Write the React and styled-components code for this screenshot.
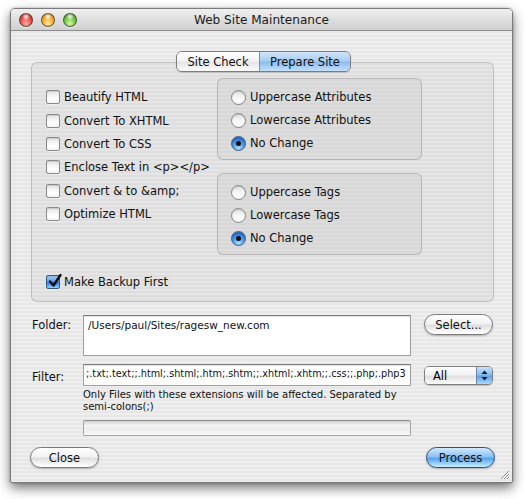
import React from "react";
import styled, { createGlobalStyle, css } from "styled-components";

const Global = createGlobalStyle`
  html, body { margin: 0; padding: 0; background: #ffffff; }
  body { font-family: "DejaVu Sans", "Liberation Sans", sans-serif; color: #000; }
  * { box-sizing: border-box; }
`;

const Page = styled.div`
  width: 525px;
  height: 499px;
  padding: 8px 12px 0 10px;
`;

const Window = styled.div`
  width: 503px;
  height: 475px;
  display: flex;
  flex-direction: column;
  border: 1px solid #7a7a7a;
  border-radius: 5px 5px 2px 2px;
  box-shadow: 0 5px 12px rgba(0, 0, 0, 0.55), 0 0 2px rgba(0,0,0,0.3);
  background: repeating-linear-gradient(180deg, #eeeeee 0px, #eeeeee 2px, #e7e7e7 2px, #e7e7e7 4px);
  overflow: hidden;
  position: relative;
`;

const TitleBar = styled.div`
  height: 22px;
  flex: none;
  display: flex;
  align-items: center;
  position: relative;
  padding-left: 8px;
  gap: 8px;
  background: linear-gradient(180deg, #f0f0f0 0%, #e0e0e0 45%, #cfcfcf 100%);
  border-bottom: 1px solid #8f8f8f;
`;

const lightColors = {
  red: ["#ffb0a8", "#e0443a", "#a3160f"],
  yellow: ["#ffe9a0", "#f0a620", "#b86f05"],
  green: ["#d9f7a8", "#66c23a", "#2f7f12"],
};

const Light = styled.span`
  width: 14px;
  height: 14px;
  border-radius: 50%;
  flex: none;
  border: 1px solid rgba(60, 60, 60, 0.75);
  background:
    radial-gradient(circle at 50% 22%, rgba(255,255,255,0.9) 0, rgba(255,255,255,0.2) 30%, transparent 42%),
    radial-gradient(circle at 50% 80%, ${(p) => lightColors[p.$c][0]} 0, ${(p) => lightColors[p.$c][1]} 55%, ${(p) => lightColors[p.$c][2]} 100%);
  box-shadow: 0 1px 1px rgba(255,255,255,0.6);
`;

const Title = styled.div`
  position: absolute;
  left: 0;
  right: 0;
  top: 0;
  height: 22px;
  line-height: 22px;
  text-align: center;
  font-size: 12.1px;
  color: #1a1a1a;
  pointer-events: none;
`;

const Body = styled.div`
  flex: 1;
  display: flex;
  flex-direction: column;
  padding: 20px 18px 0 20px;
`;

const Tabs = styled.div`
  display: flex;
  align-self: center;
  margin-left: 2px;
  height: 21px;
  margin-bottom: -10px;
  position: relative;
  z-index: 1;
  border: 1px solid #7c7c7c;
  border-radius: 6px;
  overflow: hidden;
  box-shadow: 0 1px 1px rgba(0,0,0,0.15);
`;

const Tab = styled.div`
  width: ${(p) => p.$w}px;
  height: 100%;
  display: flex;
  align-items: center;
  justify-content: center;
  font-size: 11.5px;
  color: #111;
  background: linear-gradient(180deg, #ffffff 0%, #f4f4f4 45%, #e6e6e6 55%, #fbfbfb 100%);
  ${(p) =>
    p.$active &&
    css`
      background: linear-gradient(180deg, #d2e6fb 0%, #a9cdf3 45%, #8dbdf0 55%, #c3e0fb 100%);
      border-left: 1px solid #7d8fa8;
    `}
`;

const GroupBox = styled.div`
  height: 240px;
  border: 1px solid rgba(0, 0, 0, 0.16);
  border-radius: 6px;
  background: rgba(0, 0, 0, 0.035);
  padding: 15px 0 0 14px;
  display: flex;
  flex-direction: column;
`;

const TopRow = styled.div`
  display: flex;
`;

const CheckList = styled.div`
  width: 171px;
  padding-top: 11.3px;
  display: flex;
  flex-direction: column;
  gap: 7.4px;
`;

const RadioCol = styled.div`
  display: flex;
  flex-direction: column;
  gap: 13px;
`;

const RadioGroup = styled.div`
  width: 205px;
  height: 82px;
  border: 1px solid rgba(0, 0, 0, 0.17);
  border-radius: 6px;
  background: rgba(0, 0, 0, 0.03);
  padding: 10px 0 0 13px;
  display: flex;
  flex-direction: column;
  gap: 7px;
`;

const Row = styled.label`
  height: 16px;
  display: flex;
  align-items: center;
  gap: 4px;
  font-size: 11.5px;
  color: #111;
  white-space: nowrap;
`;

const Box = styled.span`
  width: 14px;
  height: 14px;
  flex: none;
  border: 1px solid #8a8a8a;
  border-radius: 2px;
  background: linear-gradient(180deg, #e2e2e2 0%, #f6f6f6 40%, #ffffff 70%, #f2f2f2 100%);
  box-shadow: inset 0 1px 1px rgba(0,0,0,0.12), 0 1px 0 rgba(255,255,255,0.5);
  position: relative;
  ${(p) =>
    p.$checked &&
    css`
      border-color: #3a5a86;
      background: linear-gradient(180deg, #aad0f6 0%, #5b9ee8 45%, #2f7ee0 55%, #8fd0fb 100%);
    `}
`;

const CheckMark = styled.svg`
  position: absolute;
  left: 0px;
  top: -3px;
`;

const Radio = styled.span`
  width: 15px;
  height: 15px;
  flex: none;
  border-radius: 50%;
  border: 1px solid #858585;
  background: linear-gradient(180deg, #dcdcdc 0%, #f3f3f3 40%, #ffffff 75%, #f4f4f4 100%);
  box-shadow: inset 0 1px 1px rgba(0,0,0,0.12);
  display: flex;
  align-items: center;
  justify-content: center;
  ${(p) =>
    p.$checked &&
    css`
      border-color: #3c5b85;
      background: radial-gradient(circle at 50% 85%, #a9e0ff 0%, #4d98e8 45%, #2b6fcf 75%, #5d97d9 100%);
      &::after {
        content: "";
        width: 5px;
        height: 5px;
        border-radius: 50%;
        background: #111;
      }
    `}
`;

const BackupRow = styled.div`
  margin-top: 19px;
`;

const FormRow = styled.div`
  display: flex;
  align-items: flex-start;
  margin-top: ${(p) => p.$mt}px;
`;

const Label = styled.div`
  width: 52px;
  flex: none;
  font-size: 11.5px;
  color: #111;
  padding-left: 1px;
  padding-top: ${(p) => p.$pt}px;
`;

const Field = styled.div`
  width: 328px;
  height: ${(p) => p.$h}px;
  flex: none;
  background: #fff;
  border: 1px solid #a0a0a0;
  border-top-color: #7a7a7a;
  box-shadow: inset 0 1px 1px rgba(0,0,0,0.12);
  padding: ${(p) => p.$pad};
  font-size: ${(p) => p.$fs}px;
  color: #111;
  white-space: nowrap;
  overflow: hidden;
`;

const Pill = styled.div`
  height: 21px;
  width: 69px;
  flex: none;
  display: flex;
  align-items: center;
  justify-content: center;
  border: 1px solid #7b7b7b;
  border-radius: 11px;
  font-size: 11.5px;
  color: #111;
  background: linear-gradient(180deg, #ffffff 0%, #f2f2f2 45%, #dedede 55%, #f6f6f6 85%, #ffffff 100%);
  box-shadow: 0 1px 2px rgba(0,0,0,0.25);
  ${(p) =>
    p.$primary &&
    css`
      border-color: #2e4f80;
      background: linear-gradient(180deg, #d3e9fc 0%, #8cc2f1 45%, #5aa2eb 55%, #9fd6fb 85%, #cdeeff 100%);
    `}
`;

const SideButton = styled(Pill)`
  margin-left: 13px;
  margin-top: -1px;
`;

const Popup = styled.div`
  margin-left: 13px;
  margin-top: 2px;
  width: 69px;
  height: 19px;
  flex: none;
  display: flex;
  border: 1px solid #7f7f7f;
  border-radius: 5px;
  overflow: hidden;
  box-shadow: 0 1px 1px rgba(0,0,0,0.2);
  font-size: 11.5px;
`;

const PopupText = styled.div`
  flex: 1;
  padding-left: 8px;
  display: flex;
  align-items: center;
  background: linear-gradient(180deg, #ffffff 0%, #f2f2f2 45%, #e0e0e0 55%, #fbfbfb 100%);
`;

const PopupArrows = styled.div`
  width: 16px;
  display: flex;
  align-items: center;
  justify-content: center;
  border-left: 1px solid #6d86a8;
  background: linear-gradient(180deg, #c7e2fb 0%, #86bdf0 45%, #5ea3ea 55%, #a8d8fb 100%);
`;

const Help = styled.div`
  margin-left: 52px;
  margin-top: 3px;
  font-size: 10px;
  line-height: 12px;
  color: #111;
  width: 330px;
`;

const Progress = styled.div`
  margin-left: 52px;
  margin-top: 7px;
  width: 328px;
  height: 16px;
  border: 1px solid #a5a5a5;
  border-top-color: #8d8d8d;
  border-radius: 2px;
  background: linear-gradient(180deg, #cfcfcf 0%, #f4f4f4 30%, #ececec 60%, #f8f8f8 100%);
`;

const ButtonRow = styled.div`
  display: flex;
  justify-content: space-between;
  margin-top: 11px;
  margin-left: -1px;
  margin-right: -1px;
`;

const Grip = styled.svg`
  position: absolute;
  right: 2px;
  bottom: 2px;
`;

function Check({ checked, children }) {
  return (
    <Row>
      <Box $checked={checked}>
        {checked && (
          <CheckMark width="16" height="16" viewBox="0 0 16 16">
            <path d="M3 8.5 L6.5 12.5 L13.5 2" stroke="#0d0d0d" strokeWidth="2.4" fill="none" strokeLinecap="round" strokeLinejoin="round" />
          </CheckMark>
        )}
      </Box>
      {children}
    </Row>
  );
}

function RadioRow({ checked, children }) {
  return (
    <Row>
      <Radio $checked={checked} />
      {children}
    </Row>
  );
}

export default function App() {
  return (
    <>
      <Global />
      <Page>
        <Window>
          <TitleBar>
            <Light $c="red" />
            <Light $c="yellow" />
            <Light $c="green" />
            <Title>Web Site Maintenance</Title>
          </TitleBar>
          <Body>
            <Tabs>
              <Tab $w={82}>Site Check</Tab>
              <Tab $w={91} $active>Prepare Site</Tab>
            </Tabs>
            <GroupBox>
              <TopRow>
                <CheckList>
                  <Check>Beautify HTML</Check>
                  <Check>Convert To XHTML</Check>
                  <Check>Convert To CSS</Check>
                  <Check>Enclose Text in &lt;p&gt;&lt;/p&gt;</Check>
                  <Check>Convert &amp; to &amp;amp;</Check>
                  <Check>Optimize HTML</Check>
                </CheckList>
                <RadioCol>
                  <RadioGroup>
                    <RadioRow>Uppercase Attributes</RadioRow>
                    <RadioRow>Lowercase Attributes</RadioRow>
                    <RadioRow checked>No Change</RadioRow>
                  </RadioGroup>
                  <RadioGroup>
                    <RadioRow>Uppercase Tags</RadioRow>
                    <RadioRow>Lowercase Tags</RadioRow>
                    <RadioRow checked>No Change</RadioRow>
                  </RadioGroup>
                </RadioCol>
              </TopRow>
              <BackupRow>
                <Check checked>Make Backup First</Check>
              </BackupRow>
            </GroupBox>

            <FormRow $mt={13}>
              <Label $pt={3}>Folder:</Label>
              <Field $h={41} $pad="3px 4px" $fs={10.5}>/Users/paul/Sites/ragesw_new.com</Field>
              <SideButton>Select...</SideButton>
            </FormRow>

            <FormRow $mt={8}>
              <Label $pt={6}>Filter:</Label>
              <Field $h={22} $pad="3px 2px" $fs={9.7}>;.txt;.text;;.html;.shtml;.htm;.shtm;;.xhtml;.xhtm;;.css;;.php;.php3</Field>
              <Popup>
                <PopupText>All</PopupText>
                <PopupArrows>
                  <svg width="7" height="11" viewBox="0 0 7 11">
                    <path d="M3.5 0.5 L6.5 4 L0.5 4 Z" fill="#1a1a1a" />
                    <path d="M3.5 10.5 L6.5 7 L0.5 7 Z" fill="#1a1a1a" />
                  </svg>
                </PopupArrows>
              </Popup>
            </FormRow>

            <Help>Only Files with these extensions will be affected. Separated by semi-colons(;)</Help>
            <Progress />

            <ButtonRow>
              <Pill>Close</Pill>
              <Pill $primary>Process</Pill>
            </ButtonRow>
          </Body>
          <Grip width="12" height="12" viewBox="0 0 12 12">
            <path d="M11 3 L3 11 M11 6 L6 11 M11 9 L9 11" stroke="#8a8a8a" strokeWidth="1" />
            <path d="M11 4 L4 11 M11 7 L7 11" stroke="#ffffff" strokeWidth="1" />
          </Grip>
        </Window>
      </Page>
    </>
  );
}
